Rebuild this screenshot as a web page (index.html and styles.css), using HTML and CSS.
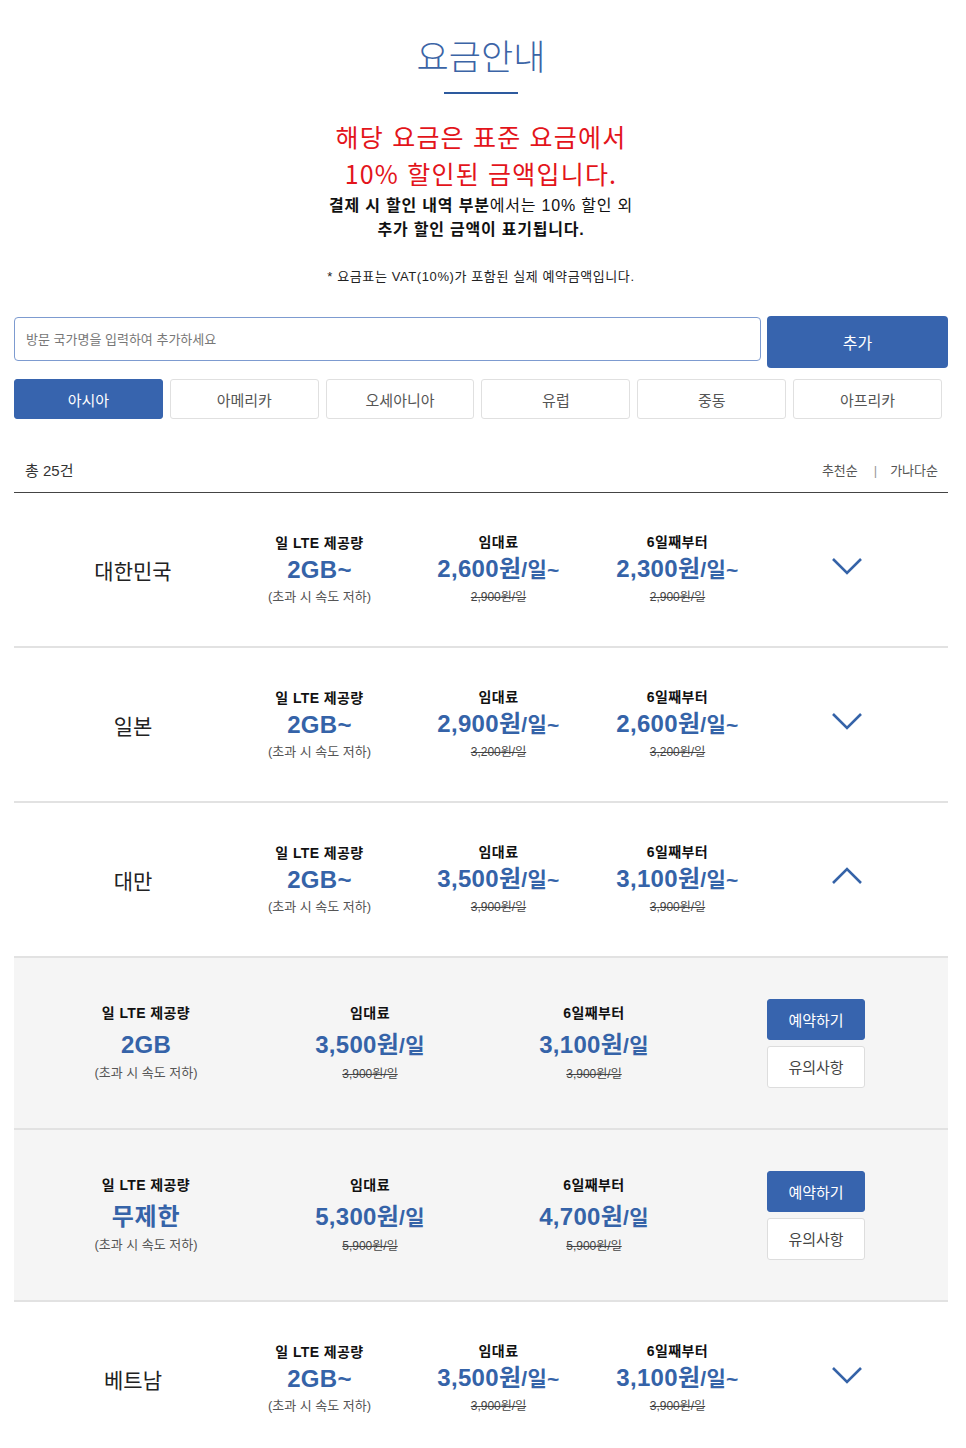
FILE: index.html
```html
<!DOCTYPE html>
<html lang="ko">
<head>
<meta charset="utf-8">
<title>요금안내</title>
<link rel="stylesheet" href="styles.css">
</head>
<body>
<div class="wrap">
  <header class="head">
    <h1 class="title">요금안내</h1>
    <div class="title-bar"></div>
    <p class="notice-red">해당 요금은 표준 요금에서<br>10% 할인된 금액입니다.</p>
    <p class="notice-black"><b>결제 시 할인 내역 부분</b>에서는 10% 할인 외<br><b>추가 할인 금액이 표기됩니다.</b></p>
    <p class="note">* 요금표는 VAT(10%)가 포함된 실제 예약금액입니다.</p>
  </header>

  <div class="search">
    <input class="search-input" type="text" placeholder="방문 국가명을 입력하여 추가하세요">
    <button class="search-btn">추가</button>
  </div>

  <div class="tabs">
    <button class="tab active">아시아</button>
    <button class="tab">아메리카</button>
    <button class="tab">오세아니아</button>
    <button class="tab">유럽</button>
    <button class="tab">중동</button>
    <button class="tab">아프리카</button>
  </div>

  <div class="list-head">
    <span class="count">총 25건</span>
    <span class="sort">추천순<span class="sep">|</span>가나다순</span>
  </div>

  <div class="row">
    <div class="name">대한민국</div>
    <div class="cell"><div class="lbl">일 LTE 제공량</div><div class="val">2GB~</div><div class="sub">(초과 시 속도 저하)</div></div>
    <div class="cell"><div class="lbl">임대료</div><div class="val">2,600원<span class="unit">/일~</span></div><div class="sub strike">2,900원/일</div></div>
    <div class="cell"><div class="lbl">6일째부터</div><div class="val">2,300원<span class="unit">/일~</span></div><div class="sub strike">2,900원/일</div></div>
    <div class="toggle"><svg width="32" height="18" viewBox="0 0 32 18"><polyline points="2,2 16,16 30,2" fill="none" stroke="#3563a8" stroke-width="2.6"/></svg></div>
  </div>

  <div class="row">
    <div class="name">일본</div>
    <div class="cell"><div class="lbl">일 LTE 제공량</div><div class="val">2GB~</div><div class="sub">(초과 시 속도 저하)</div></div>
    <div class="cell"><div class="lbl">임대료</div><div class="val">2,900원<span class="unit">/일~</span></div><div class="sub strike">3,200원/일</div></div>
    <div class="cell"><div class="lbl">6일째부터</div><div class="val">2,600원<span class="unit">/일~</span></div><div class="sub strike">3,200원/일</div></div>
    <div class="toggle"><svg width="32" height="18" viewBox="0 0 32 18"><polyline points="2,2 16,16 30,2" fill="none" stroke="#3563a8" stroke-width="2.6"/></svg></div>
  </div>

  <div class="row">
    <div class="name">대만</div>
    <div class="cell"><div class="lbl">일 LTE 제공량</div><div class="val">2GB~</div><div class="sub">(초과 시 속도 저하)</div></div>
    <div class="cell"><div class="lbl">임대료</div><div class="val">3,500원<span class="unit">/일~</span></div><div class="sub strike">3,900원/일</div></div>
    <div class="cell"><div class="lbl">6일째부터</div><div class="val">3,100원<span class="unit">/일~</span></div><div class="sub strike">3,900원/일</div></div>
    <div class="toggle"><svg width="32" height="18" viewBox="0 0 32 18"><polyline points="2,16 16,2 30,16" fill="none" stroke="#3563a8" stroke-width="2.6"/></svg></div>
  </div>

  <div class="plan">
    <div class="cell"><div class="lbl">일 LTE 제공량</div><div class="val">2GB</div><div class="sub">(초과 시 속도 저하)</div></div>
    <div class="cell"><div class="lbl">임대료</div><div class="val">3,500원<span class="unit">/일</span></div><div class="sub strike">3,900원/일</div></div>
    <div class="cell"><div class="lbl">6일째부터</div><div class="val">3,100원<span class="unit">/일</span></div><div class="sub strike">3,900원/일</div></div>
    <div class="actions"><button class="btn-book">예약하기</button><button class="btn-info">유의사항</button></div>
  </div>

  <div class="plan">
    <div class="cell"><div class="lbl">일 LTE 제공량</div><div class="val val-kr">무제한</div><div class="sub">(초과 시 속도 저하)</div></div>
    <div class="cell"><div class="lbl">임대료</div><div class="val">5,300원<span class="unit">/일</span></div><div class="sub strike">5,900원/일</div></div>
    <div class="cell"><div class="lbl">6일째부터</div><div class="val">4,700원<span class="unit">/일</span></div><div class="sub strike">5,900원/일</div></div>
    <div class="actions"><button class="btn-book">예약하기</button><button class="btn-info">유의사항</button></div>
  </div>

  <div class="row">
    <div class="name">베트남</div>
    <div class="cell"><div class="lbl">일 LTE 제공량</div><div class="val">2GB~</div><div class="sub">(초과 시 속도 저하)</div></div>
    <div class="cell"><div class="lbl">임대료</div><div class="val">3,500원<span class="unit">/일~</span></div><div class="sub strike">3,900원/일</div></div>
    <div class="cell"><div class="lbl">6일째부터</div><div class="val">3,100원<span class="unit">/일~</span></div><div class="sub strike">3,900원/일</div></div>
    <div class="toggle"><svg width="32" height="18" viewBox="0 0 32 18"><polyline points="2,2 16,16 30,2" fill="none" stroke="#3563a8" stroke-width="2.6"/></svg></div>
  </div>
</div>
</body>
</html>
```

FILE: styles.css
```css
* { box-sizing: border-box; }
html, body { margin: 0; padding: 0; background: #fff; }
body {
  font-family: "Liberation Sans", "Noto Sans CJK KR", sans-serif;
  color: #222;
}
.wrap { padding: 0 18px 0 14px; }

.head { text-align: center; padding-top: 35px; }
.title {
  margin: 0;
  font-size: 35px;
  line-height: 40px;
  font-weight: 300;
  color: #3b64a6;
  font-family: "Noto Sans CJK KR", sans-serif;
}
.title-bar { width: 74px; height: 2px; background: #2d5a9e; margin: 17px auto 0; }
.notice-red {
  margin: 24px 0 0;
  font-size: 25px;
  line-height: 37px;
  letter-spacing: 1.2px;
  color: #e3141b;
  font-family: "Noto Sans CJK KR", sans-serif;
}
.notice-black {
  margin: 2px 0 0;
  font-size: 16px;
  line-height: 24px;
  letter-spacing: 0.8px;
  color: #111;
}
.notice-black b { font-weight: 700; }
.note { margin: 25px 0 0; font-size: 13px; line-height: 20px; letter-spacing: 0.6px; color: #222; }

.search { display: flex; gap: 6px; align-items: flex-start; margin-top: 29px; }
.search-input {
  flex: 1;
  height: 44px;
  margin-top: 1px;
  border: 1px solid #7d9bd0;
  border-radius: 4px;
  padding: 0 11px;
  font-family: inherit;
  font-size: 13px;
  color: #333;
  outline: none;
}
.search-input::placeholder { color: #777; }
.search-btn {
  width: 181px;
  height: 52px;
  border: 0;
  border-radius: 4px;
  background: #3764ae;
  color: #fff;
  font-family: inherit;
  font-size: 16px;
}

.tabs {
  display: grid;
  grid-template-columns: repeat(6, 1fr);
  gap: 7px;
  margin: 11px 6px 0 0;
}
.tab {
  height: 40px;
  border: 1px solid #e0e0e0;
  border-radius: 3px;
  background: #fff;
  color: #555;
  font-family: inherit;
  font-size: 15px;
}
.tab.active { background: #3764ae; border-color: #3764ae; color: #fff; }

.list-head {
  display: flex;
  justify-content: space-between;
  align-items: center;
  margin-top: 41px;
  padding: 0 10px 10px 11px;
  height: 33px;
  border-bottom: 1px solid #444;
}
.count { font-size: 15px; color: #333; line-height: 22px; }
.sort { font-size: 13px; color: #555; line-height: 22px; }
.sep { color: #999; margin: 0 13px 0 16px; }

.row {
  display: grid;
  grid-template-columns: 216px 179px 179px 179px 160px;
  align-items: center;
  height: 155px;
  border-bottom: 2px solid #e2e2e2;
}
.name { padding-left: 22px; text-align: center; font-size: 21px; color: #222; font-family: "Noto Sans CJK KR", sans-serif; }
.cell { text-align: center; }
.lbl { font-size: 14px; line-height: 20px; font-weight: 700; color: #111; letter-spacing: 0.4px; }
.val { font-size: 24px; line-height: 34px; font-weight: 700; color: #3563a8; letter-spacing: 0.3px; }
.val-kr { letter-spacing: 0.8px; }
.unit { font-size: 21px; }
.sub { font-size: 13px; line-height: 20px; color: #555; }
.strike { font-size: 12px; color: #444; text-decoration: line-through; }
.toggle { display: flex; justify-content: center; margin-top: -8px; }

.plan {
  display: grid;
  grid-template-columns: repeat(4, 224px);
  align-items: center;
  padding-left: 20px;
  height: 172px;
  background: #f5f5f5;
  border-bottom: 2px solid #e2e2e2;
}
.plan .lbl { margin-bottom: 4px; }
.plan .val { line-height: 36px; }
.actions { display: flex; flex-direction: column; align-items: center; gap: 6px; padding-right: 4px; }
.btn-book, .btn-info {
  width: 98px;
  height: 41px;
  border-radius: 3px;
  font-family: inherit;
  font-size: 15px;
}
.btn-book { background: #3764ae; border: 1px solid #3764ae; color: #fff; }
.btn-info { background: #fff; border: 1px solid #ddd; color: #444; height: 42px; }
```
